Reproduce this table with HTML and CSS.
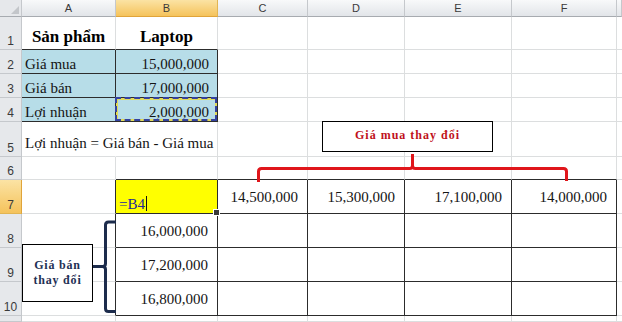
FILE: index.html
```html
<!DOCTYPE html>
<html lang="vi">
<head>
<meta charset="utf-8">
<link rel="stylesheet" href="styles.css">
</head>
<body>
<div class="page">
  <div class="sheet">
    <!-- header row -->
    <div class="hd corner"><span class="tri"></span></div>
    <div class="hd col">A</div>
    <div class="hd col act">B</div>
    <div class="hd col">C</div>
    <div class="hd col">D</div>
    <div class="hd col">E</div>
    <div class="hd col">F</div>
    <div class="hd col"></div>

    <!-- row 1 -->
    <div class="hd row">1</div>
    <div class="c ctr bold db">Sản phẩm</div>
    <div class="c ctr bold db">Laptop</div>
    <div class="c"></div><div class="c"></div><div class="c"></div><div class="c"></div><div class="c"></div>

    <!-- row 2 -->
    <div class="hd row">2</div>
    <div class="c blue dr db">Giá mua</div>
    <div class="c blue num dr db">15,000,000</div>
    <div class="c"></div><div class="c"></div><div class="c"></div><div class="c"></div><div class="c"></div>

    <!-- row 3 -->
    <div class="hd row">3</div>
    <div class="c blue dr db">Giá bán</div>
    <div class="c blue num dr db">17,000,000</div>
    <div class="c"></div><div class="c"></div><div class="c"></div><div class="c"></div><div class="c"></div>

    <!-- row 4 -->
    <div class="hd row">4</div>
    <div class="c blue dr db">Lợi nhuận</div>
    <div class="c blue num ants">2,000,000</div>
    <div class="c"></div><div class="c"></div><div class="c"></div><div class="c"></div><div class="c"></div>

    <!-- row 5 -->
    <div class="hd row">5</div>
    <div class="c ovf">Lợi nhuận = Giá bán - Giá mua</div>
    <div class="c"></div>
    <div class="c"></div><div class="c"></div><div class="c"></div><div class="c"></div><div class="c"></div>

    <!-- row 6 -->
    <div class="hd row">6</div>
    <div class="c"></div>
    <div class="c db"></div><div class="c db"></div><div class="c db"></div><div class="c db"></div><div class="c db"></div>
    <div class="c"></div>

    <!-- row 7 -->
    <div class="hd row act">7</div>
    <div class="c dr"></div>
    <div class="c yellow dr db">=B4<span class="caret"></span><span class="handle"></span></div>
    <div class="c num mid dr db">14,500,000</div>
    <div class="c num mid dr db">15,300,000</div>
    <div class="c num mid dr db">17,100,000</div>
    <div class="c num mid dr db">14,000,000</div>
    <div class="c"></div>

    <!-- row 8 -->
    <div class="hd row">8</div>
    <div class="c dr"></div>
    <div class="c num mid dr db">16,000,000</div>
    <div class="c dr db"></div><div class="c dr db"></div><div class="c dr db"></div><div class="c dr db"></div>
    <div class="c"></div>

    <!-- row 9 -->
    <div class="hd row">9</div>
    <div class="c dr"></div>
    <div class="c num mid dr db">17,200,000</div>
    <div class="c dr db"></div><div class="c dr db"></div><div class="c dr db"></div><div class="c dr db"></div>
    <div class="c"></div>

    <!-- row 10 -->
    <div class="hd row">10</div>
    <div class="c dr"></div>
    <div class="c num mid dr db">16,800,000</div>
    <div class="c dr db"></div><div class="c dr db"></div><div class="c dr db"></div><div class="c dr db"></div>
    <div class="c"></div>

    <!-- row 11 (partial) -->
    <div class="hd row"></div>
    <div class="c"></div><div class="c"></div><div class="c"></div><div class="c"></div><div class="c"></div><div class="c"></div><div class="c"></div>
  </div>

  <div class="callout callout-top">Giá mua thay đổi</div>
  <div class="callout callout-left">Giá bán<br>thay đổi</div>

  <svg class="braces" width="622" height="322" viewBox="0 0 622 322">
    <path d="M258.5,182 V171.5 Q258.5,168.5 261.5,168.5 H409.5 Q412.5,168.5 412.5,165.5 V154 M412.5,165.5 Q412.5,168.5 415.5,168.5 H563.5 Q566.5,168.5 566.5,171.5 V181" fill="none" stroke="#e0161b" stroke-width="3"/>
    <path d="M116,222 H108.5 Q105.5,222 105.5,225 V263.5 Q105.5,266.5 102.5,266.5 H93 M102.5,266.5 Q105.5,266.5 105.5,269.5 V308.5 Q105.5,311.5 108.5,311.5 H116" fill="none" stroke="#1d2c4c" stroke-width="3"/>
  </svg>
</div>
</body>
</html>
```

FILE: styles.css
```css
html, body {
  margin: 0;
  padding: 0;
  background: #ffffff;
}

body {
  width: 622px;
  height: 322px;
  overflow: hidden;
}

.page {
  position: relative;
  width: 622px;
  height: 322px;
}

.sheet {
  display: grid;
  grid-template-columns: 22px 94px 102px 90px 97px 107px 105px 5px;
  grid-template-rows: 17px 33px 24px 24px 24px 35px 23px 34px 34px 34px 34px 6px;
  font-family: "Liberation Serif", "Times New Roman", serif;
  font-size: 15px;
  color: #141414;
}

.sheet > div {
  box-sizing: border-box;
  min-width: 0;
}

/* headers */
.hd {
  font-family: "Liberation Sans", Arial, sans-serif;
  font-size: 11px;
  color: #3a3a3a;
  border-right: 1px solid #c5c8cc;
  border-bottom: 1px solid #c5c8cc;
  display: flex;
}

.col {
  background: linear-gradient(#f8f9fa, #e2e5e9);
  align-items: center;
  justify-content: center;
  border-bottom-color: #a7abb0;
}

.row {
  background: #e6e8eb;
  justify-content: center;
  align-items: flex-end;
  padding-bottom: 1px;
  font-size: 12px;
}

.corner {
  background: #e6e8eb;
  justify-content: flex-end;
  align-items: flex-end;
  padding: 0 2px 2px 0;
  border-bottom-color: #a7abb0;
}

.tri {
  width: 0;
  height: 0;
  border-left: 8px solid transparent;
  border-bottom: 8px solid #c3c6ca;
}

.hd.act {
  background: linear-gradient(#fbe3a4, #f5c35c);
  border-right-color: #e2b552;
}

.col.act {
  border-bottom-color: #e0a43a;
}

.row.act {
  border-bottom-color: #e2b552;
  border-right-color: #e0a43a;
}

/* cells */
.c {
  background: #ffffff;
  border-right: 1px solid #dcdedf;
  border-bottom: 1px solid #dcdedf;
  display: flex;
  align-items: flex-end;
  padding: 0 3px 1px 3px;
  white-space: nowrap;
  line-height: 16px;
}

.ctr {
  justify-content: center;
}

.bold {
  font-weight: bold;
  font-size: 17px;
  line-height: 19px;
  padding-bottom: 3px;
  color: #000;
}

.num {
  justify-content: flex-end;
  padding-right: 8px;
}

.mid {
  align-items: center;
  padding-right: 9px;
  padding-bottom: 0;
}

.blue {
  background: #b7dde8;
}

.yellow {
  background: #ffff00;
  color: #23289a;
  position: relative;
}

.dr {
  border-right-color: #2c2c2c;
}

.db {
  border-bottom-color: #2c2c2c;
}

.ovf {
  border-right-color: transparent;
  overflow: visible;
  padding-bottom: 5px;
  position: relative;
  z-index: 1;
  background: transparent;
}

.ants {
  position: relative;
  border-right-color: #2c2c2c;
  border-bottom-color: #2c2c2c;
  box-shadow: inset 0 0 0 2px #e2da5a;
}

.ants::after {
  content: "";
  position: absolute;
  inset: -1px 0 0 -1px;
  border: 2px dashed #3442a0;
  pointer-events: none;
}

.caret {
  display: inline-block;
  width: 1px;
  height: 15px;
  background: #111;
  margin-left: 1px;
  margin-bottom: 1px;
}

.handle {
  position: absolute;
  right: -3px;
  bottom: -3px;
  width: 5px;
  height: 5px;
  background: #3a3a3a;
  border: 1px solid #fff;
}

/* overlays */
.callout {
  position: absolute;
  box-sizing: border-box;
  background: #ffffff;
  border: 1px solid #000000;
  font-family: "Liberation Serif", "Times New Roman", serif;
  font-weight: bold;
  font-size: 12px;
  letter-spacing: 1px;
  display: flex;
  align-items: center;
  justify-content: center;
  text-align: center;
}

.callout-top {
  left: 322px;
  top: 121px;
  width: 171px;
  height: 31px;
  color: #c0121b;
  padding-bottom: 2px;
}

.callout-left {
  left: 22px;
  top: 244px;
  width: 71px;
  height: 58px;
  color: #1f3155;
  line-height: 15px;
  letter-spacing: 0.8px;
}

.braces {
  position: absolute;
  left: 0;
  top: 0;
  pointer-events: none;
}
```
